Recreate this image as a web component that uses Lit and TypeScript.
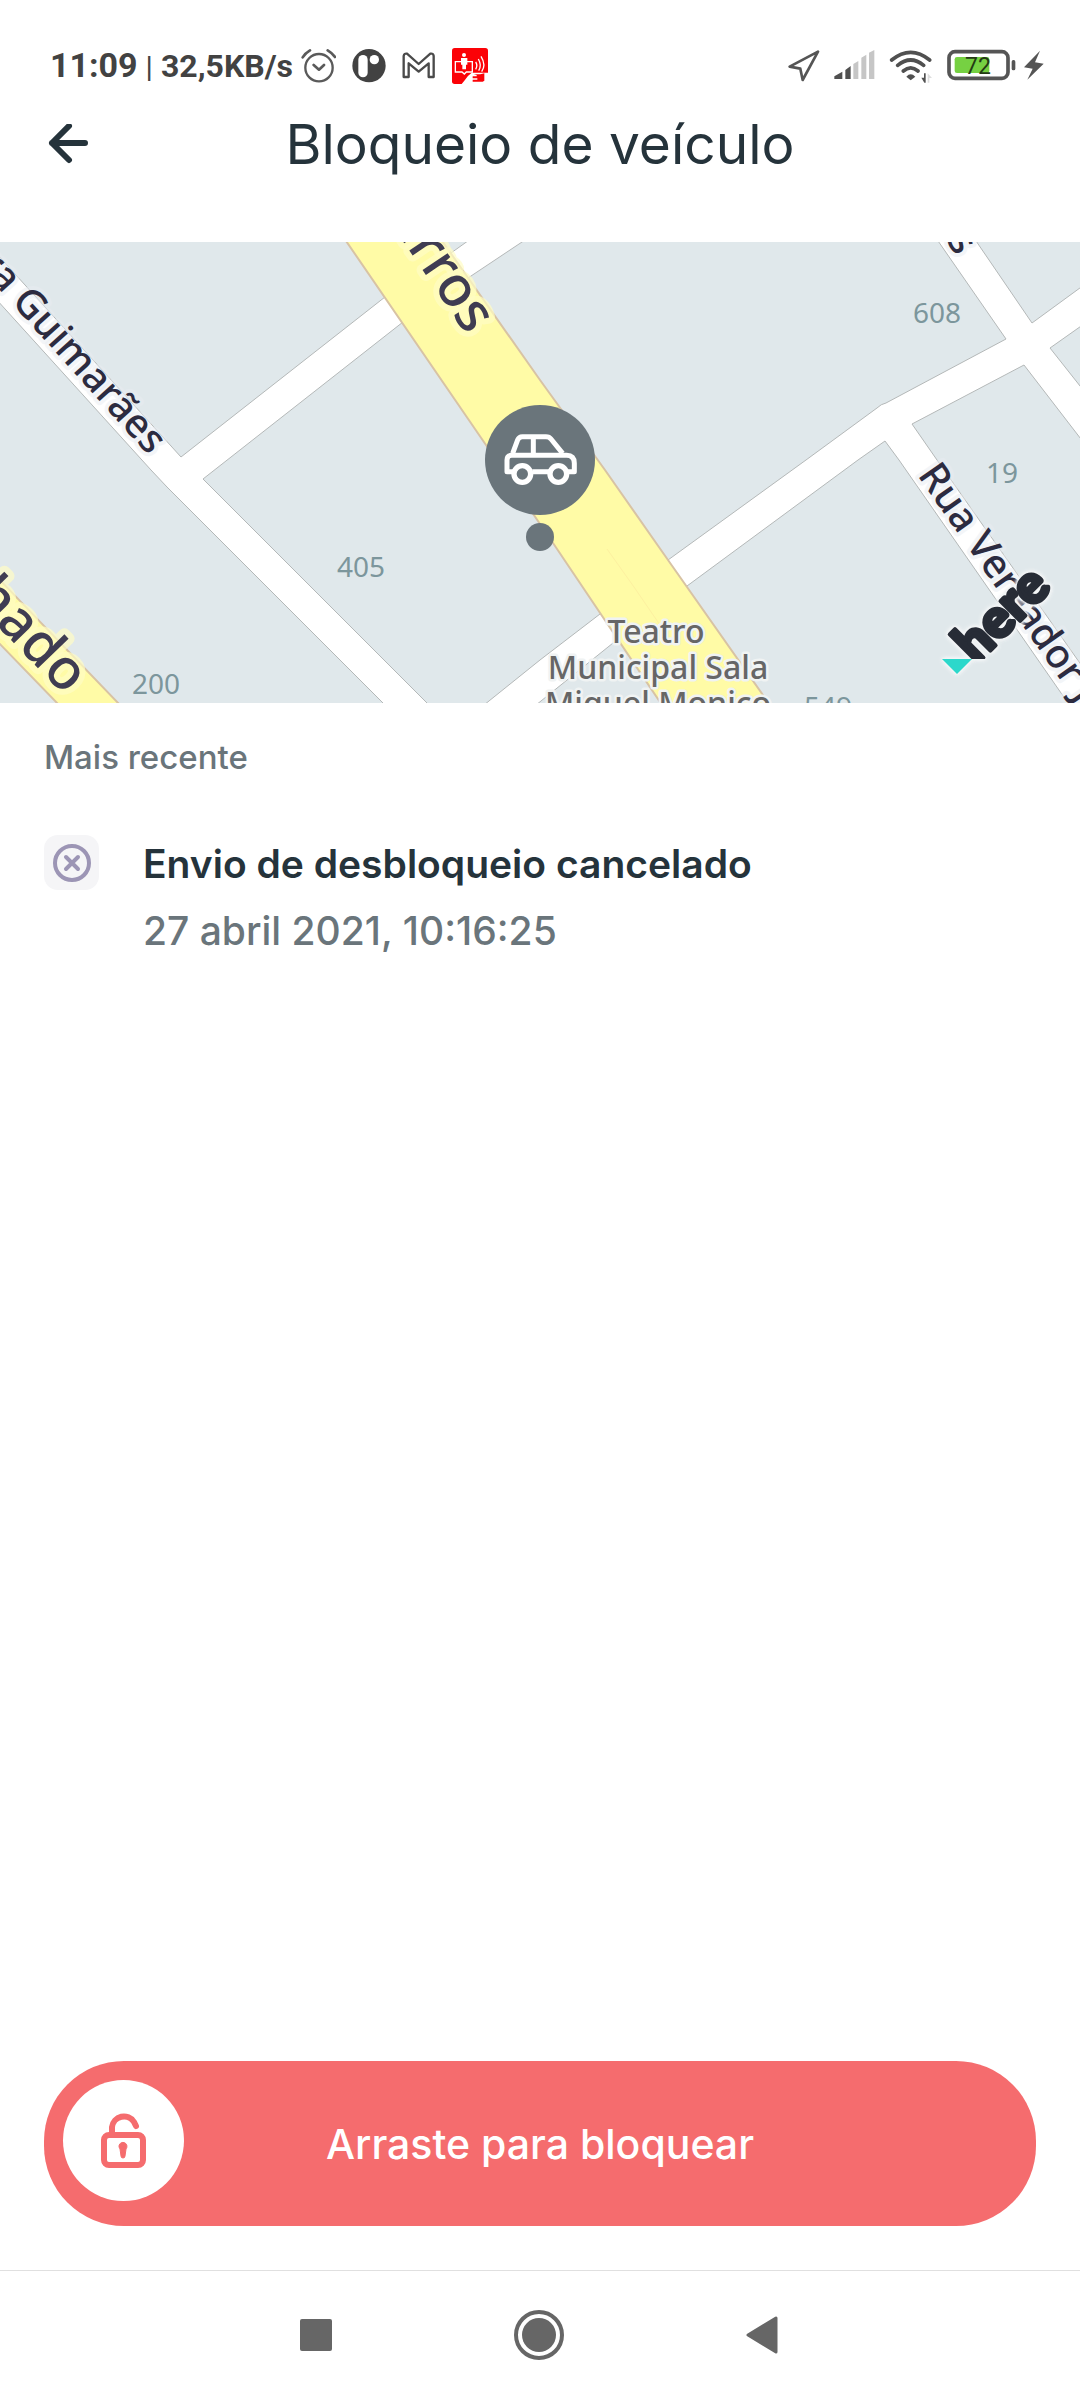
import { LitElement, html, svg, css } from "lit";
import { customElement, property, state } from "lit/decorators.js";

@customElement("status-bar")
export class StatusBar extends LitElement {
  static styles = css`
    :host {
      display: block;
      font-family: Roboto, "Liberation Sans", sans-serif;
      color: #424242;
    }
    .bar {
      display: flex;
      align-items: center;
      justify-content: space-between;
      padding: 46px 36px 0 50px;
      height: 40px;
    }
    .side {
      display: flex;
      align-items: center;
    }
    .left {
      gap: 16px;
    }
    .right {
      gap: 14px;
    }
    .power {
      display: flex;
      gap: 8px;
    }
    .info {
      display: flex;
      align-items: baseline;
      gap: 8px;
      line-height: 40px;
      margin-right: -8px;
    }
    .clock {
      font-size: 34px;
      font-weight: 700;
    }
    .rate {
      font-size: 32px;
      font-weight: 700;
    }
    .rule {
      font-size: 30px;
    }
    svg {
      display: block;
      flex: none;
    }
  `;

  render() {
    return html`
      <div class="bar">
        <div class="side left">
          <div class="info">
            <span class="clock">11:09</span>
            <span class="rule">|</span>
            <span class="rate">32,5KB/s</span>
          </div>
          <svg width="35" height="36" viewBox="33 48 105 108" fill="none" stroke="#5a5a5a" stroke-width="8" stroke-linecap="round" stroke-linejoin="round">
            <circle cx="87" cy="107" r="41" stroke-width="7" />
            <path d="M38 76Q46 63 60 55M113 55Q127 63 135 75M71 99l16 14 15-14" />
          </svg>
          <svg width="34" height="36" viewBox="187 48 102 108">
            <circle cx="238" cy="101" r="50" fill="#424242" />
            <rect x="206" y="69" width="28" height="67" rx="14" fill="#fff" />
            <circle cx="254" cy="83" r="14" fill="#fff" />
          </svg>
          <svg width="34" height="36" viewBox="337 48 102 108" fill="#fff" stroke="#4a4a4a" stroke-width="7" stroke-linejoin="round">
            <path d="M342 135V72q2-9 10-7l35 31 35-31q9-2 10 7v63h-15V94l-30 25-30-25v41z" />
          </svg>
          <svg width="36" height="36" viewBox="483 48 108 108">
            <path d="M491 48h92q8 0 8 8v92q0 8-8 8h-92q-8 0-8-8V56q0-8 8-8z" fill="#fb0207" />
            <path d="M512 156l8-10q8-14 22-24h49v34z" fill="#fff" />
            <path d="M548 127h20l12-3v22l-5 3h-30v-6h14v-4h-14v-6h12v-4z" fill="#fb0207" />
            <g fill="none" stroke="#fff" stroke-width="4">
              <path d="M493 89h51v31h-18l-6 6-7-6h-20zM554 90q7 10 0 22M562 81q11 19 1 35M570 73q16 26 2 46" />
            </g>
            <circle cx="519" cy="69" r="6" fill="#fff" />
            <path d="M510 78h19v20h-4v14h-11V98h-4z" fill="#fff" />
          </svg>
        </div>
        <div class="side right">
          <svg width="32" height="36" viewBox="29 51 96 108" fill="none" stroke="#555" stroke-width="8" stroke-linejoin="round">
            <path d="M119 62L34 107l32 6 7 34z" />
          </svg>
          <svg width="41" height="36" viewBox="161 51 123 108">
            <path d="M162 144v-8l24-14v22zM195 144v-27l16-12v39z" fill="#505050" />
            <path d="M219 144v-45l15-9v54zM243 144V80l15-9v73zM266 144V65l16-8v87z" fill="#c6c6c6" />
          </svg>
          <svg width="44" height="36" viewBox="328 51 132 108" fill="none" stroke="#505050" stroke-width="11" stroke-linecap="round">
            <path d="M336 87q57-46 114 0M354 103q39-32 78 0M371 120q22-19 44 0" />
            <path d="M380 137q13-14 27 0l-14 11z" fill="#505050" stroke="none" />
            <path d="M433 127h5v28h-4l-9-15h8z" fill="#505050" stroke="none" />
            <path d="M444 155v-28l13 14h-8v14z" fill="#ddd" stroke="none" />
          </svg>
          <div class="power">
            <svg width="69" height="36" viewBox="503 51 207 108">
              <rect x="509" y="62" width="177" height="80" rx="18" fill="none" stroke="#555" stroke-width="11" />
              <rect x="526" y="78" width="104" height="48" rx="7" fill="#76d142" />
              <rect x="697" y="87" width="11" height="31" rx="5" fill="#555" />
              <text x="596" y="129" text-anchor="middle" font-size="69" fill="#243a14">72</text>
            </svg>
            <svg width="20" height="36" viewBox="732 51 60 108">
              <path d="M780 59l-48 50 26 4-16 33 49-48-26-4z" fill="#555" />
            </svg>
          </div>
        </div>
      </div>
    `;
  }
}

@customElement("vehicle-map")
export class VehicleMap extends LitElement {
  static styles = css`
    :host {
      display: block;
      background: #e0e8eb;
    }
    .map {
      display: block;
      width: 100%;
      height: 461px;
    }
    .road {
      fill: #fff;
      stroke: #b4b8b8;
      stroke-width: 1;
    }
    .avenue {
      fill: #fffba6;
      stroke: #d8c3a4;
      stroke-width: 2;
    }
    .label {
      font-family: "Noto Sans", "Open Sans", sans-serif;
      paint-order: stroke;
      stroke-linejoin: round;
    }
    .street {
      font-size: 40px;
      font-weight: 500;
      fill: #2c2b40;
      stroke: #e8ecf2;
      stroke-width: 8;
      stroke-opacity: 0.5;
    }
    .main {
      font-size: 56px;
      font-weight: 500;
      fill: #3f3c52;
      stroke: #fffcc4;
      stroke-width: 12;
      stroke-opacity: 0.7;
    }
    .number {
      font-size: 28px;
      fill: #7c969c;
    }
    .place {
      font-size: 32px;
      font-weight: 500;
      fill: #666;
      stroke: #f0f3f3;
      stroke-width: 5;
      text-anchor: middle;
    }
    .end {
      text-anchor: end;
    }
    .brand {
      font-family: Lato, "Noto Sans", sans-serif;
      font-weight: 900;
      font-size: 54px;
      fill: #272c36;
      stroke: #272c36;
      stroke-width: 4;
      stroke-linejoin: round;
    }
    .glow {
      filter: drop-shadow(0 0 2px #f3f5f6) drop-shadow(0 0 1px #f3f5f6) drop-shadow(0 0 1px #f3f5f6);
    }
  `;

  private numbers = [
    { x: 913, y: 323, text: "608" },
    { x: 986, y: 483, text: "19" },
    { x: 337, y: 577, text: "405" },
    { x: 132, y: 694, text: "200" },
    { x: 804, y: 717, text: "549" },
  ];

  render() {
    return html`
      <svg class="map" viewBox="0 242 1080 461" preserveAspectRatio="xMidYMid slice" role="img" aria-label="Mapa">
        <defs>
          <clipPath id="foot"><rect x="900" y="540" width="200" height="119" /></clipPath>
        </defs>
        <path
          class="road"
          d="M-4 253L181 457 385 297 451 253 472 238H528L468 278 403 322 203 479 429 705H385L167 487 151 470-4 299z"
        />
        <path
          class="road"
          d="M484 705L540 660 600 614 668 560 806 460 877 408Q881 404 886 403L1006 339 936 238H974L1032 323 1084 285V324L1050 348 1084 391V443L1024 365 912 424 937 460 1084 669V727L1068 703 899 460 885 441 858 460 687 586 613 643 536 705z"
        />
        <path class="avenue" d="M344 238L486 445 553 543 662 705H770L668 560 605 470 540 380 440 238z" />
        <path class="avenue" d="M-4 576L120 705H59L-4 640z" />
        <path d="M607 549l27 38 26 38" fill="none" stroke="#fdf0a0" stroke-width="1" />
        ${this.numbers.map((n) => svg`<text class="label number" x=${n.x} y=${n.y}>${n.text}</text>`)}
        <text class="label street end" transform="translate(149 456) rotate(48)">ra Guimarães</text>
        <text class="label street" transform="translate(917 475) rotate(55)">Rua Vereador João</text>
        <text class="label street end" transform="translate(957 257) rotate(56)">s</text>
        <text class="label main end" transform="translate(467 336) rotate(56)">Barros</text>
        <text class="label main end" transform="translate(65 696) rotate(46)">Machado</text>
        <text class="label place" x="656" y="643">Teatro</text>
        <text class="label place" x="658" y="679">Municipal Sala</text>
        <text class="label place" x="658" y="715">Miguel Monico</text>

        <g class="glow">
          <path d="M942 659h30l-15 15z" fill="#2cd8cb" />
          <g clip-path="url(#foot)">
            <text class="brand" transform="translate(976 665) rotate(-45)">here</text>
          </g>
        </g>

        <circle cx="540" cy="460" r="55" fill="#6a757b" />
        <circle cx="540" cy="537" r="14" fill="#6a757b" />
        <g transform="translate(470 390) scale(0.3333)" fill="none" stroke="#fff" stroke-width="15" stroke-linejoin="round">
          <path d="M130 245H111v-35q0-14 14-14h165q23 0 23 24v25h-20M187 245h50" />
          <path d="M128 190l15-40q4-10 14-10h71q10 0 15 7l35 43M190 140v50" />
          <circle cx="157" cy="252" r="25" stroke-width="16" />
          <circle cx="265" cy="252" r="25" stroke-width="16" />
        </g>
      </svg>
    `;
  }
}

@customElement("lock-slider")
export class LockSlider extends LitElement {
  @property() label = "";
  @state() private value = 0;

  static styles = css`
    :host {
      display: block;
    }
    .track {
      display: grid;
      background: #f56c6e;
      border-radius: 80px;
      overflow: hidden;
    }
    .track > * {
      grid-area: 1 / 1;
    }
    .text {
      place-self: center;
      color: #fff;
      font-size: 41px;
      font-weight: 500;
      line-height: 48px;
      pointer-events: none;
    }
    .range {
      appearance: none;
      box-sizing: border-box;
      width: 100%;
      margin: 0;
      padding: 19px 19px 25px;
      background: none;
      cursor: pointer;
    }
    .range::-webkit-slider-thumb {
      appearance: none;
      width: 121px;
      height: 121px;
      border-radius: 50%;
      background: #fff;
    }
    .range::-webkit-slider-runnable-track {
      height: 121px;
    }
    .rail {
      display: flex;
      margin: 19px 140px 25px 19px;
      pointer-events: none;
      z-index: 1;
    }
    .knob {
      width: 121px;
      height: 121px;
      flex: none;
    }
  `;

  private onInput(e: Event) {
    this.value = Number((e.target as HTMLInputElement).value);
  }

  render() {
    return html`
      <div class="track">
        <input id="lock" class="range" type="range" min="0" max="100" .value=${String(this.value)} @input=${this.onInput} />
        <label class="text" for="lock">${this.label}</label>
        <div class="rail" aria-hidden="true">
          <svg class="knob" style="margin-left: ${this.value}%" viewBox="0 0 121 121" fill="none" stroke="#f56c6e" stroke-width="6">
            <rect x="41" y="55" width="39" height="30" rx="5" />
            <path d="M49 54V47a12 12 0 0 1 22-5q1 2 2 4" stroke-linecap="round" />
            <path d="M56 67a4 4 0 1 1 7 2l-1 7q0 2-2 2t-2-2l-1-7z" fill="#f56c6e" stroke-width="1" />
          </svg>
        </div>
      </div>
    `;
  }
}

@customElement("app-root")
export class AppRoot extends LitElement {
  static styles = css`
    :host {
      display: block;
      font-family: Inter, "Liberation Sans", sans-serif;
      color: #25333b;
      background: #fff;
    }
    .page {
      display: flex;
      flex-direction: column;
      min-height: 100vh;
    }
    .header {
      display: grid;
      grid-template-columns: 48px 1fr 48px;
      align-items: center;
      padding: 25px 44px 65px;
    }
    .title {
      margin: 0;
      text-align: center;
      font-size: 55px;
      font-weight: 400;
      line-height: 66px;
    }
    .icon-button {
      display: grid;
      place-items: center;
      padding: 0;
      border: 0;
      background: none;
      cursor: pointer;
    }
    .icon-button svg {
      display: block;
    }
    .recent {
      flex: 1;
      padding: 34px 44px;
    }
    .caption {
      margin: 0 0 55px;
      font-size: 33px;
      font-weight: 500;
      line-height: 40px;
      color: #6a757b;
    }
    .event {
      display: flex;
      gap: 44px;
    }
    .badge {
      display: grid;
      place-items: center;
      flex: none;
      width: 55px;
      height: 55px;
      margin-top: 3px;
      border-radius: 14px;
      background: #f5f5f7;
    }
    .event-title {
      margin: 0 0 3px;
      font-size: 39px;
      font-weight: 600;
      line-height: 64px;
    }
    .event-time {
      display: block;
      font-size: 39px;
      font-weight: 500;
      line-height: 64px;
      color: #6a757b;
    }
    .action {
      padding: 0 44px 44px;
    }
    .nav {
      display: flex;
      justify-content: center;
      gap: 127px;
      padding: 0 2px 2px 0;
      border-top: 1px solid #e0e0e0;
    }
    .nav .icon-button {
      width: 96px;
      height: 127px;
    }
  `;

  render() {
    return html`
      <div class="page">
        <status-bar></status-bar>
        <header class="header">
          <button class="icon-button" aria-label="Voltar">
            <svg width="40" height="40" viewBox="0 0 40 40" fill="none" stroke="#25333b" stroke-width="6" stroke-linecap="round" stroke-linejoin="round">
              <path d="M21 2L4 19l17 17M4 19h33" />
            </svg>
          </button>
          <h1 class="title">Bloqueio de veículo</h1>
        </header>
        <vehicle-map></vehicle-map>
        <main class="recent">
          <h2 class="caption">Mais recente</h2>
          <article class="event">
            <span class="badge">
              <svg width="38" height="38" viewBox="0 0 38 38" fill="none" stroke="#9c95b5" stroke-width="4" stroke-linecap="round">
                <circle cx="19" cy="19" r="17" />
                <path d="M13 13l12 12M25 13L13 25" />
              </svg>
            </span>
            <div>
              <h3 class="event-title">Envio de desbloqueio cancelado</h3>
              <time class="event-time" datetime="2021-04-27T10:16:25">27 abril 2021, 10:16:25</time>
            </div>
          </article>
        </main>
        <div class="action">
          <lock-slider label="Arraste para bloquear"></lock-slider>
        </div>
        <nav class="nav">
          <button class="icon-button" aria-label="Recentes">
            <svg width="32" height="32"><rect width="32" height="32" rx="2" fill="#666" /></svg>
          </button>
          <button class="icon-button" aria-label="Início">
            <svg width="50" height="50">
              <circle cx="25" cy="25" r="23" fill="none" stroke="#666" stroke-width="4" />
              <circle cx="25" cy="25" r="17" fill="#666" />
            </svg>
          </button>
          <button class="icon-button" aria-label="Retornar">
            <svg width="32" height="38" fill="#666" stroke="#666" stroke-width="3" stroke-linejoin="round">
              <path d="M2 19L30 2v34z" />
            </svg>
          </button>
        </nav>
      </div>
    `;
  }
}
